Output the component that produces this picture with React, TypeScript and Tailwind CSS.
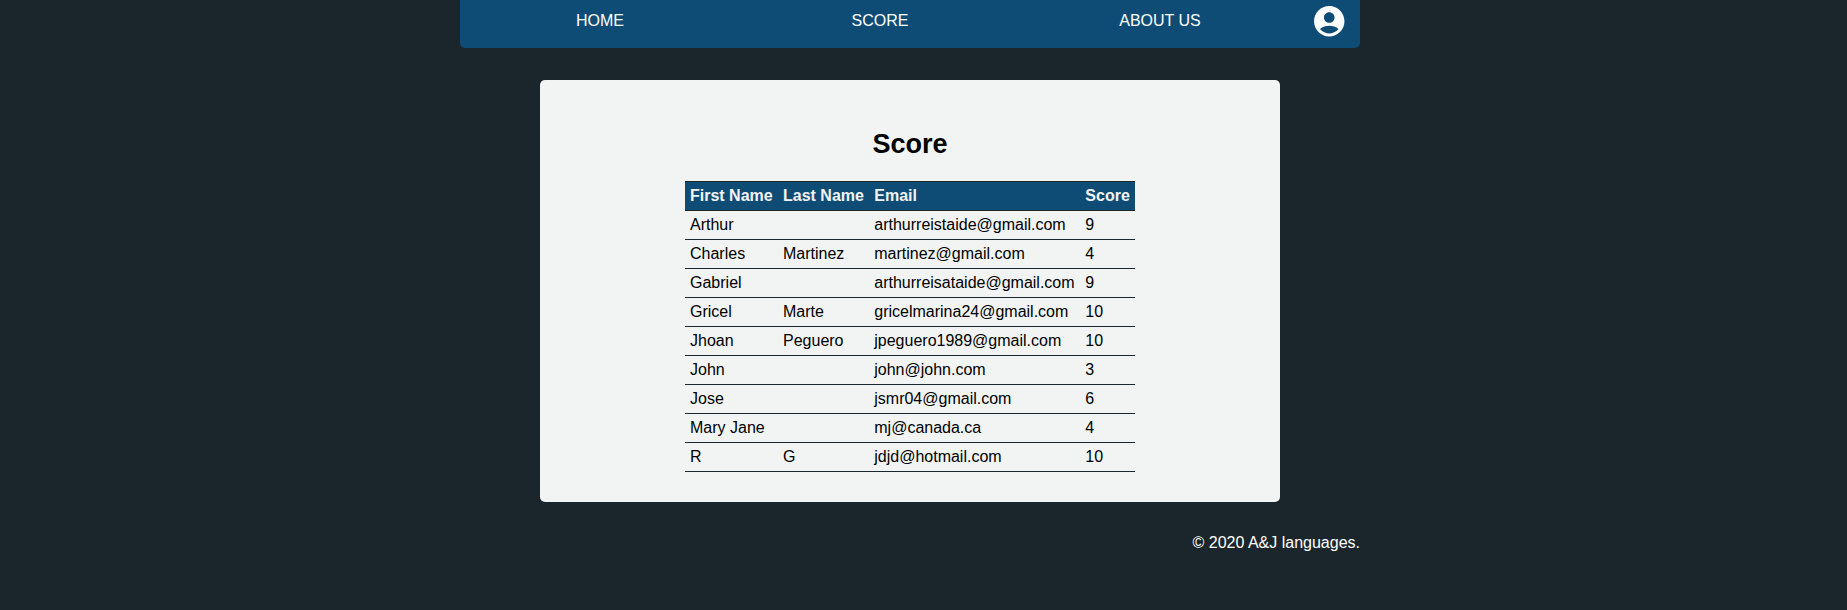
const rows: [string, string, string, number][] = [
  ["Arthur", "", "arthurreistaide@gmail.com", 9],
  ["Charles", "Martinez", "martinez@gmail.com", 4],
  ["Gabriel", "", "arthurreisataide@gmail.com", 9],
  ["Gricel", "Marte", "gricelmarina24@gmail.com", 10],
  ["Jhoan", "Peguero", "jpeguero1989@gmail.com", 10],
  ["John", "", "john@john.com", 3],
  ["Jose", "", "jsmr04@gmail.com", 6],
  ["Mary Jane", "", "mj@canada.ca", 4],
  ["R", "G", "jdjd@hotmail.com", 10],
];

const headings = ["First Name", "Last Name", "Email", "Score"];

export default function App() {
  return (
    <div className="min-h-screen bg-[#1b262c] pl-[460px] font-['Liberation_Sans',Arial,sans-serif] text-base leading-[18px] text-black">
      <div className="w-[900px]">
        <nav className="flex h-12 rounded-b-[5px] bg-[#0f4c75] text-white">
          {["HOME", "SCORE", "ABOUT US"].map((label) => (
            <a key={label} className="w-[280px] pt-3 text-center">
              {label}
            </a>
          ))}
          <a className="flex w-[60px] justify-center pt-[3px] pr-px" aria-label="Account">
            <svg viewBox="0 0 24 24" className="h-[36.5px] w-[36.5px] fill-white">
              <path d="M12 2C6.48 2 2 6.48 2 12s4.48 10 10 10 10-4.48 10-10S17.52 2 12 2zm0 4c1.93 0 3.5 1.57 3.5 3.5S13.93 13 12 13s-3.5-1.57-3.5-3.5S10.07 6 12 6zm0 14c-2.03 0-4.43-.82-6.14-2.88C7.55 15.8 9.68 15 12 15s4.45.8 6.14 2.12C16.43 19.18 14.03 20 12 20z" />
            </svg>
          </a>
        </nav>
        <main className="mx-auto mt-8 h-[422px] w-[740px] rounded-[5px] bg-[#f2f4f4] pt-[49px]">
          <h1 className="text-center text-[27px] leading-[31px] font-bold">Score</h1>
          <table className="mx-auto mt-[21px] w-[450px] border-collapse text-left">
            <thead>
              <tr className="h-[29px] border-y border-[#1b262c] bg-[#0f4c75] text-[#f2f4f4]">
                {headings.map((h) => (
                  <th key={h} className="px-[5px] py-0 font-bold whitespace-nowrap">
                    {h}
                  </th>
                ))}
              </tr>
            </thead>
            <tbody>
              {rows.map((row) => (
                <tr key={row[2]} className="h-[29px] border-b border-[#1b262c]">
                  {row.map((cell, i) => (
                    <td key={i} className="px-[5px] py-0 whitespace-nowrap">
                      {cell}
                    </td>
                  ))}
                </tr>
              ))}
            </tbody>
          </table>
        </main>
        <footer className="mt-8 text-right text-white">© 2020 A&amp;J languages.</footer>
      </div>
    </div>
  );
}
